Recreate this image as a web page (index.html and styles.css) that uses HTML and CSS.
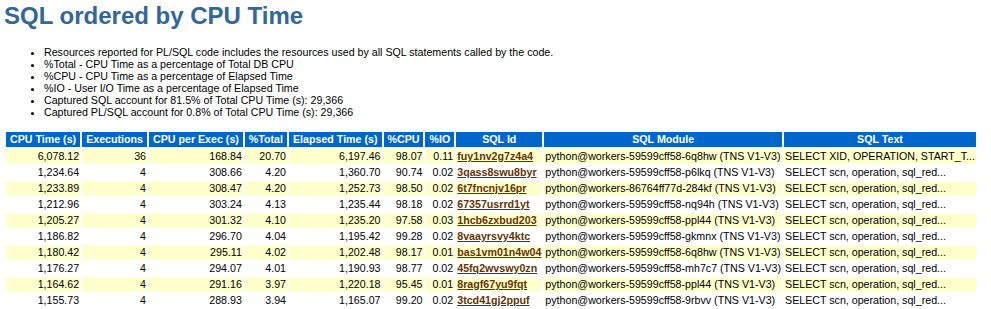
FILE: index.html
```html
<!DOCTYPE html>
<html lang="en">
<head>
  <meta charset="UTF-8" />
  <title>SQL ordered by CPU Time</title>
  <link rel="stylesheet" href="styles.css">
</head>
<body class="awr">
  <h2 class="awr">SQL ordered by CPU Time</h2>
  <ul class="awr">
    <li class="awr">Resources reported for PL/SQL code includes the resources used by all SQL statements called by the code.</li>
    <li class="awr">%Total - CPU Time as a percentage of Total DB CPU</li>
    <li class="awr">%CPU - CPU Time as a percentage of Elapsed Time</li>
    <li class="awr">%IO - User I/O Time as a percentage of Elapsed Time</li>
    <li class="awr">Captured SQL account for 81.5% of Total CPU Time (s): 29,366</li>
    <li class="awr">Captured PL/SQL account for 0.8% of Total CPU Time (s): 29,366</li>
  </ul>
  <table class="tdiff">
    <tr>
      <th class="awrbg">CPU Time (s)</th>
      <th class="awrbg">Executions</th>
      <th class="awrbg">CPU per Exec (s)</th>
      <th class="awrbg">%Total</th>
      <th class="awrbg">Elapsed Time (s)</th>
      <th class="awrbg">%CPU</th>
      <th class="awrbg">%IO</th>
      <th class="awrbg">SQL Id</th>
      <th class="awrbg">SQL Module</th>
      <th class="awrbg">SQL Text</th>
    </tr>
    <tr class="awrc">
      <td class="num">6,078.12</td><td class="num">36</td><td class="num">168.84</td><td class="num">20.70</td><td class="num">6,197.46</td><td class="num">98.07</td><td class="num">0.11</td>
      <td><a class="awr" href="#fuy1nv2g7z4a4">fuy1nv2g7z4a4</a></td>
      <td>python@workers-59599cff58-6q8hw (TNS V1-V3)</td><td>SELECT XID, OPERATION, START_T...</td>
    </tr>
    <tr class="awrnc">
      <td class="num">1,234.64</td><td class="num">4</td><td class="num">308.66</td><td class="num">4.20</td><td class="num">1,360.70</td><td class="num">90.74</td><td class="num">0.02</td>
      <td><a class="awr" href="#3qass8swu8byr">3qass8swu8byr</a></td>
      <td>python@workers-59599cff58-p6lkq (TNS V1-V3)</td><td>SELECT scn, operation, sql_red...</td>
    </tr>
    <tr class="awrc">
      <td class="num">1,233.89</td><td class="num">4</td><td class="num">308.47</td><td class="num">4.20</td><td class="num">1,252.73</td><td class="num">98.50</td><td class="num">0.02</td>
      <td><a class="awr" href="#6t7fncnjv16pr">6t7fncnjv16pr</a></td>
      <td>python@workers-86764ff77d-284kf (TNS V1-V3)</td><td>SELECT scn, operation, sql_red...</td>
    </tr>
    <tr class="awrnc">
      <td class="num">1,212.96</td><td class="num">4</td><td class="num">303.24</td><td class="num">4.13</td><td class="num">1,235.44</td><td class="num">98.18</td><td class="num">0.02</td>
      <td><a class="awr" href="#67357usrrd1yt">67357usrrd1yt</a></td>
      <td>python@workers-59599cff58-nq94h (TNS V1-V3)</td><td>SELECT scn, operation, sql_red...</td>
    </tr>
    <tr class="awrc">
      <td class="num">1,205.27</td><td class="num">4</td><td class="num">301.32</td><td class="num">4.10</td><td class="num">1,235.20</td><td class="num">97.58</td><td class="num">0.03</td>
      <td><a class="awr" href="#1hcb6zxbud203">1hcb6zxbud203</a></td>
      <td>python@workers-59599cff58-ppl44 (TNS V1-V3)</td><td>SELECT scn, operation, sql_red...</td>
    </tr>
    <tr class="awrnc">
      <td class="num">1,186.82</td><td class="num">4</td><td class="num">296.70</td><td class="num">4.04</td><td class="num">1,195.42</td><td class="num">99.28</td><td class="num">0.02</td>
      <td><a class="awr" href="#8vaayrsvy4ktc">8vaayrsvy4ktc</a></td>
      <td>python@workers-59599cff58-gkmnx (TNS V1-V3)</td><td>SELECT scn, operation, sql_red...</td>
    </tr>
    <tr class="awrc">
      <td class="num">1,180.42</td><td class="num">4</td><td class="num">295.11</td><td class="num">4.02</td><td class="num">1,202.48</td><td class="num">98.17</td><td class="num">0.01</td>
      <td><a class="awr" href="#bas1vm01n4w04">bas1vm01n4w04</a></td>
      <td>python@workers-59599cff58-6q8hw (TNS V1-V3)</td><td>SELECT scn, operation, sql_red...</td>
    </tr>
    <tr class="awrnc">
      <td class="num">1,176.27</td><td class="num">4</td><td class="num">294.07</td><td class="num">4.01</td><td class="num">1,190.93</td><td class="num">98.77</td><td class="num">0.02</td>
      <td><a class="awr" href="#45fq2wvswy0zn">45fq2wvswy0zn</a></td>
      <td>python@workers-59599cff58-mh7c7 (TNS V1-V3)</td><td>SELECT scn, operation, sql_red...</td>
    </tr>
    <tr class="awrc">
      <td class="num">1,164.62</td><td class="num">4</td><td class="num">291.16</td><td class="num">3.97</td><td class="num">1,220.18</td><td class="num">95.45</td><td class="num">0.01</td>
      <td><a class="awr" href="#8ragf67yu9fqt">8ragf67yu9fqt</a></td>
      <td>python@workers-59599cff58-ppl44 (TNS V1-V3)</td><td>SELECT scn, operation, sql_red...</td>
    </tr>
    <tr class="awrnc">
      <td class="num">1,155.73</td><td class="num">4</td><td class="num">288.93</td><td class="num">3.94</td><td class="num">1,165.07</td><td class="num">99.20</td><td class="num">0.02</td>
      <td><a class="awr" href="#3tcd41gj2ppuf">3tcd41gj2ppuf</a></td>
      <td>python@workers-59599cff58-9rbvv (TNS V1-V3)</td><td>SELECT scn, operation, sql_red...</td>
    </tr>
  </table>
</body>
</html>
```

FILE: styles.css
```css
body.awr {
  font: bold 10pt "Liberation Sans", Arial, Helvetica, sans-serif;
  color: black;
  background: white;
  margin: 2px 4px 0 4px;
}

h2.awr {
  font: bold 18pt "Liberation Sans", Arial, Helvetica, sans-serif;
  color: #336699;
  background-color: white;
  margin: 0;
}

ul.awr {
  margin: 16px 0 12px 0;
  padding-left: 40px;
}

li.awr {
  font: 8pt "Liberation Sans", Arial, Helvetica, sans-serif;
  color: black;
  background: white;
}

table.tdiff {
  border-spacing: 2px;
  border-collapse: separate;
}

th.awrbg {
  font: bold 8pt "Liberation Sans", Arial, Helvetica, sans-serif;
  color: white;
  background: #0066cc;
  padding: 1px 4px 2px 4px;
  white-space: nowrap;
}

tr.awrc td,
tr.awrnc td {
  font: 8pt "Liberation Sans", Arial, Helvetica, sans-serif;
  color: black;
  vertical-align: top;
  padding: 1px;
  white-space: nowrap;
}

tr.awrc td {
  background: #ffffcc;
}

tr.awrnc td {
  background: white;
}

td.num {
  text-align: right;
}

a.awr {
  font: bold 8pt "Liberation Sans", Arial, Helvetica, sans-serif;
  color: #663300;
}
```
